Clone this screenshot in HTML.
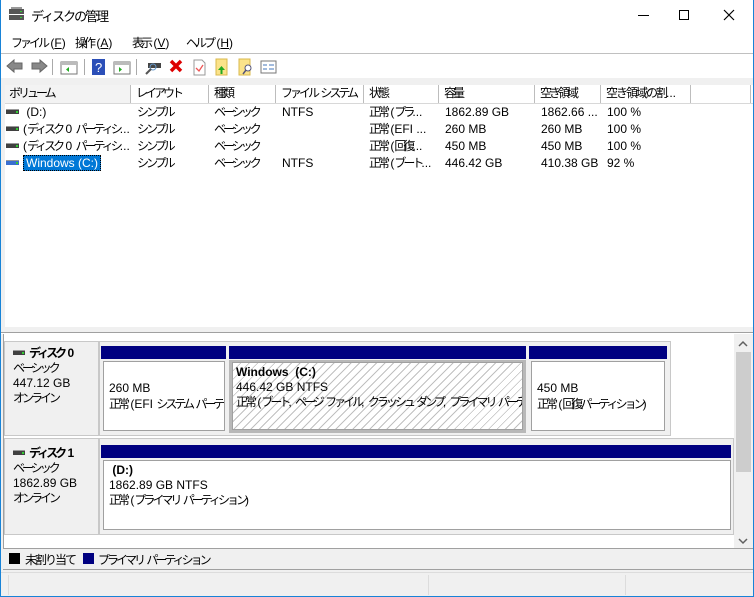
<!DOCTYPE html>
<html><head><meta charset="utf-8"><style>
*{margin:0;padding:0;box-sizing:border-box}
body{width:754px;height:597px;position:relative;background:#fff;font-family:"Liberation Sans","Noto Sans CJK JP",sans-serif;font-size:12px;color:#000;overflow:hidden}
i.j{font-style:normal;letter-spacing:-3px}
i.k{font-style:normal;letter-spacing:-2px}
.a{position:absolute;white-space:nowrap}
.hd{position:absolute;top:85px;height:18px;border-right:1px solid #bdbdbd;background:#fff;padding-left:5px;line-height:17px;white-space:nowrap;overflow:hidden}
.r{position:absolute;height:17px;line-height:17px;white-space:nowrap}
.bar{position:absolute;background:#000080}
.box{position:absolute;background:#fff;border:1px solid #a0a0a0;white-space:nowrap;overflow:hidden}
.pt{position:absolute;background:#f0f0f0;border:1px solid #c8c8c8}
.drv{display:inline-block;width:13px;height:5px;background:#404040;border-top:1px solid #999;position:relative;top:-2px;margin-right:4px}
.drv::after{content:"";position:absolute;right:1px;top:1px;width:2px;height:2px;background:#3c3}
</style></head><body>
<svg class="a" style="left:8px;top:7px" width="18" height="16"><rect x="1" y="2" width="15" height="5" fill="#555"/><rect x="1" y="8" width="15" height="5" fill="#555"/><rect x="3" y="0" width="11" height="2" fill="#999"/><rect x="12" y="4" width="2" height="1" fill="#3c3"/><rect x="12" y="10" width="2" height="1" fill="#3c3"/></svg>
<div class="a" style="left:31px;top:6px;font-size:13px"><i class="k">ディスクの管理</i></div>
<div class="a" style="left:638px;top:15px;width:11px;height:1px;background:#000"></div>
<div class="a" style="left:679px;top:10px;width:10px;height:10px;border:1px solid #000"></div>
<svg class="a" style="left:723px;top:9px" width="12" height="12"><path d="M1 1L11 11M11 1L1 11" stroke="#000" stroke-width="1.2"/></svg>
<div class="a" style="left:11px;top:34px"><i class="j">ファイル</i> (<u>F</u>)</div>
<div class="a" style="left:75px;top:34px"><i class="j">操作</i> (<u>A</u>)</div>
<div class="a" style="left:132px;top:34px"><i class="j">表示</i> (<u>V</u>)</div>
<div class="a" style="left:186px;top:34px"><i class="j">ヘルプ</i> (<u>H</u>)</div>
<div class="a" style="left:0;top:53px;width:754px;height:1px;background:#c0c0c0"></div>
<svg class="a" style="left:5px;top:57px" width="280" height="20">
<path d="M2 9L9 3V6H17V12H9V15Z" fill="#888" stroke="#666"/>
<path d="M42 9L35 3V6H27V12H35V15Z" fill="#888" stroke="#666"/>
<rect x="47" y="2" width="1" height="16" fill="#aaa"/>
<rect x="56" y="5" width="16" height="12" fill="#fff" stroke="#777"/><rect x="56" y="5" width="16" height="3" fill="#bbb"/><path d="M64 10V15L61 12.5Z" fill="#2a2"/>
<rect x="79" y="2" width="1" height="16" fill="#aaa"/>
<rect x="87" y="2" width="13" height="16" fill="#2b4fb8"/><text x="90" y="15" fill="#fff" font-size="13" font-family="Liberation Sans">?</text>
<rect x="109" y="5" width="16" height="12" fill="#fff" stroke="#777"/><rect x="109" y="5" width="16" height="3" fill="#bbb"/><path d="M114 10V15L117 12.5Z" fill="#2a2"/>
<rect x="131" y="2" width="1" height="16" fill="#aaa"/>
<rect x="143" y="6" width="13" height="5" fill="#444"/><circle cx="148" cy="10" r="3" fill="none" stroke="#69c"/><path d="M146 12L141 17" stroke="#555" stroke-width="2"/>
<path d="M166 4L176 14M176 4L166 14" stroke="#d00" stroke-width="3.5"/>
<path d="M189 3H197L200 6V18H189Z" fill="#fff" stroke="#999"/><path d="M191 11L194 14L198 8" stroke="#e55" fill="none" stroke-width="1.3"/>
<path d="M211 2H222V18H211Z" fill="#fbe38a" stroke="#d9b84c"/><path d="M216.5 9L213 13H215.5V17H217.5V13H220Z" fill="#2a2"/>
<path d="M234 2H245V18H234Z" fill="#fbe38a" stroke="#d9b84c"/><circle cx="243" cy="11" r="3" fill="#fff" stroke="#557"/><path d="M241 13L238 17" stroke="#557" stroke-width="1.5"/>
<rect x="256" y="4" width="15" height="12" fill="#fff" stroke="#777"/><path d="M258 8H262M264 8H269M258 12H262M264 12H269" stroke="#47b"/>
</svg>
<div class="a" style="left:1px;top:78px;width:752px;height:7px;background:#f0f0f0"></div>
<div class="hd" style="left:4px;width:127px;background:#f3f3f3"><i class="j">ボリューム</i></div>
<div class="hd" style="left:131px;width:78px"><i class="j">レイアウト</i></div>
<div class="hd" style="left:209px;width:67px"><i class="j">種類</i></div>
<div class="hd" style="left:276px;width:88px"><i class="j">ファイル</i> <i class="j">システム</i></div>
<div class="hd" style="left:364px;width:75px"><i class="j">状態</i></div>
<div class="hd" style="left:439px;width:96px"><i class="j">容量</i></div>
<div class="hd" style="left:535px;width:66px"><i class="j">空き領域</i></div>
<div class="hd" style="left:601px;width:90px"><i class="k">空き領域の割</i>...</div>
<div class="hd" style="left:691px;width:60px"></div>
<div class="a" style="left:1px;top:103px;width:752px;height:1px;background:#d8d8d8"></div>
<div class="a" style="left:1px;top:84px;width:4px;height:243px;background:#f0f0f0"></div>
<div class="r" style="left:6px;top:104px"><span class="drv"></span> (D:)</div>
<div class="r" style="left:6px;top:121px"><span class="drv"></span>(<i class="j">ディスク</i> 0 <i class="j">パーティシ</i>...</div>
<div class="r" style="left:6px;top:138px"><span class="drv"></span>(<i class="j">ディスク</i> 0 <i class="j">パーティシ</i>...</div>
<div class="r" style="left:6px;top:155px"><span class="drv" style="background:#3a6fd0"></span><span style="background:#0078d7;color:#fff;padding:0 2px;border:1px dotted #000">Windows (C:)</span></div>
<div class="r" style="left:137px;top:104px"><i class="j">シンプル</i></div><div class="r" style="left:137px;top:121px"><i class="j">シンプル</i></div><div class="r" style="left:137px;top:138px"><i class="j">シンプル</i></div><div class="r" style="left:137px;top:155px"><i class="j">シンプル</i></div>
<div class="r" style="left:214px;top:104px"><i class="j">ベーシック</i></div><div class="r" style="left:214px;top:121px"><i class="j">ベーシック</i></div><div class="r" style="left:214px;top:138px"><i class="j">ベーシック</i></div><div class="r" style="left:214px;top:155px"><i class="j">ベーシック</i></div>
<div class="r" style="left:282px;top:104px">NTFS</div><div class="r" style="left:282px;top:155px">NTFS</div>
<div class="r" style="left:369px;top:104px"><i class="j">正常</i> (<i class="j">プラ</i>...</div><div class="r" style="left:369px;top:121px"><i class="j">正常</i> (EFI ...</div><div class="r" style="left:369px;top:138px"><i class="j">正常</i> (<i class="j">回復</i>...</div><div class="r" style="left:369px;top:155px"><i class="j">正常</i> (<i class="j">ブート</i>...</div>
<div class="r" style="left:445px;top:104px">1862.89 GB</div><div class="r" style="left:445px;top:121px">260 MB</div><div class="r" style="left:445px;top:138px">450 MB</div><div class="r" style="left:445px;top:155px">446.42 GB</div>
<div class="r" style="left:541px;top:104px">1862.66 ...</div><div class="r" style="left:541px;top:121px">260 MB</div><div class="r" style="left:541px;top:138px">450 MB</div><div class="r" style="left:541px;top:155px">410.38 GB</div>
<div class="r" style="left:607px;top:104px">100 %</div><div class="r" style="left:607px;top:121px">100 %</div><div class="r" style="left:607px;top:138px">100 %</div><div class="r" style="left:607px;top:155px">92 %</div>
<div class="a" style="left:1px;top:327px;width:752px;height:6px;background:#f0f0f0;border-bottom:1px solid #a0a0a0"></div>
<div class="a" style="left:1px;top:334px;width:752px;height:238px;background:#f0f0f0"></div>
<div class="a" style="left:3px;top:334px;width:731px;height:214px;background:#fff;border-left:1px solid #a0a0a0"></div>
<div class="pt" style="left:4px;top:341px;width:95px;height:95px"></div>
<div class="a" style="left:13px;top:346px;line-height:15px"><span class="drv" style="width:12px"></span><b><i class="j">ディスク</i> 0</b><br><i class="j">ベーシック</i><br>447.12 GB<br><i class="j">オンライン</i></div>
<div class="pt" style="left:99px;top:341px;width:572px;height:95px"></div>
<div class="bar" style="left:101px;top:346px;width:125px;height:13px"></div>
<div class="bar" style="left:229px;top:346px;width:297px;height:13px"></div>
<div class="bar" style="left:529px;top:346px;width:138px;height:13px"></div>
<div class="box" style="left:103px;top:361px;width:122px;height:70px;padding:18px 0 0 5px;line-height:16px">260 MB<br><i class="j">正常</i> (EFI <i class="j">システム</i> <i class="j">パーテ</i></div>
<div class="a" style="left:229px;top:360px;width:297px;height:73px;background:#b8b8b8"></div>
<div class="box" style="left:232px;top:362px;width:291px;height:68px;padding:2px 0 0 3px;line-height:15px;background:repeating-linear-gradient(135deg,#fff 0 5px,#c0c0c0 5px 6px)"><b>Windows&nbsp; (C:)</b><br>446.42 GB NTFS<br><i class="j">正常</i> (<i class="j">ブート</i>, <i class="j">ページ</i> <i class="j">ファイル</i>, <i class="j">クラッシュ</i> <i class="j">ダンプ</i>, <i class="j">プライマリ</i> <i class="j">パーテ</i></div>
<div class="box" style="left:531px;top:361px;width:134px;height:70px;padding:18px 0 0 5px;line-height:16px">450 MB<br><i class="j">正常</i> (<i class="j">回復パーティション</i>)</div>
<div class="pt" style="left:4px;top:438px;width:95px;height:97px"></div>
<div class="a" style="left:13px;top:446px;line-height:15px"><span class="drv" style="width:12px"></span><b><i class="j">ディスク</i> 1</b><br><i class="j">ベーシック</i><br>1862.89 GB<br><i class="j">オンライン</i></div>
<div class="pt" style="left:99px;top:438px;width:635px;height:97px"></div>
<div class="bar" style="left:101px;top:445px;width:630px;height:13px"></div>
<div class="box" style="left:103px;top:460px;width:628px;height:70px;padding:2px 0 0 5px;line-height:15px"><b>&nbsp;(D:)</b><br>1862.89 GB NTFS<br><i class="j">正常</i> (<i class="j">プライマリ</i> <i class="j">パーティション</i>)</div>
<div class="a" style="left:734px;top:334px;width:18px;height:214px;background:#f0f0f0"></div>
<div class="a" style="left:736px;top:352px;width:15px;height:120px;background:#cdcdcd"></div>
<svg class="a" style="left:738px;top:340px" width="10" height="8"><path d="M1 6L5 2L9 6" stroke="#606060" fill="none" stroke-width="1.5"/></svg>
<svg class="a" style="left:738px;top:537px" width="10" height="8"><path d="M1 2L5 6L9 2" stroke="#606060" fill="none" stroke-width="1.5"/></svg>
<div class="a" style="left:3px;top:548px;width:750px;height:22px;border-top:1px solid #a0a0a0;border-bottom:1px solid #a0a0a0;background:#f0f0f0"></div>
<div class="a" style="left:9px;top:553px;width:11px;height:11px;background:#000"></div>
<div class="a" style="left:25px;top:551px"><i class="k">未割り当て</i></div>
<div class="a" style="left:83px;top:553px;width:11px;height:11px;background:#000080"></div>
<div class="a" style="left:98px;top:551px"><i class="j">プライマリ</i> <i class="j">パーティション</i></div>
<div class="a" style="left:1px;top:572px;width:752px;height:24px;background:#f0f0f0;border-top:1px solid #dcdcdc"></div>
<div class="a" style="left:8px;top:575px;width:1px;height:20px;background:#dcdcdc"></div>
<div class="a" style="left:428px;top:575px;width:1px;height:20px;background:#dcdcdc"></div>
<div class="a" style="left:625px;top:575px;width:1px;height:20px;background:#dcdcdc"></div>
<div class="a" style="left:0;top:0;width:1px;height:597px;background:#1883d7"></div>
<div class="a" style="left:753px;top:0;width:1px;height:597px;background:#1883d7"></div>
<div class="a" style="left:0;top:596px;width:754px;height:1px;background:#1883d7"></div>
</body></html>
